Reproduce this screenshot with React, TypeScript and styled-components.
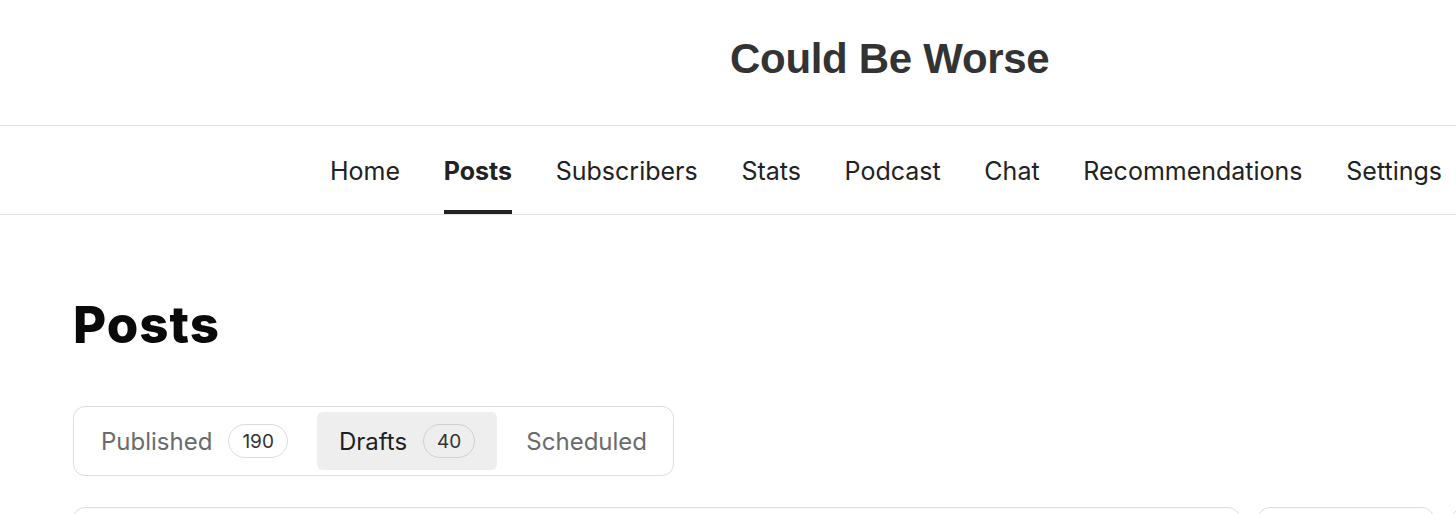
import React from "react";
import styled, { createGlobalStyle } from "styled-components";

const GlobalStyle = createGlobalStyle`
  html, body { margin: 0; padding: 0; background: #ffffff; }
  body { font-family: Inter, "Noto Sans", sans-serif; color: #222; overflow: hidden; }
  * { box-sizing: border-box; }
`;

const Header = styled.header`
  height: 126px;
  border-bottom: 1px solid #e2e2e2;
  display: flex;
  align-items: center;
  padding: 0 0 8px 730px;
`;

const Title = styled.h1`
  margin: 0;
  font-family: "Liberation Sans", Arial, sans-serif;
  font-weight: 700;
  font-size: 42px;
  letter-spacing: -0.3px;
  color: #333;
`;

const Nav = styled.nav`
  height: 89px;
  border-bottom: 1px solid #e2e2e2;
  display: flex;
  gap: 43.7px;
  padding-left: 330px;
`;

const NavItem = styled.a<{ $active?: boolean }>`
  display: flex;
  align-items: center;
  height: 88px;
  font-size: 25px;
  font-weight: ${(p) => (p.$active ? 700 : 400)};
  color: #222;
  text-decoration: none;
  white-space: nowrap;
  border-bottom: 4px solid ${(p) => (p.$active ? "#222" : "transparent")};
  padding-top: 6px;
`;

const Main = styled.main`
  padding: 80px 0 0 73px;
`;

const Heading = styled.h2`
  margin: 0;
  font-weight: 800;
  font-size: 51px;
  line-height: 60px;
  color: #0a0a0a;
  letter-spacing: 1px;
`;

const TabBox = styled.div`
  margin-top: 51px;
  display: inline-flex;
  gap: 7px;
  padding: 5px 4px 5px 5px;
  border: 1px solid #dedede;
  border-radius: 12px;
`;

const Tab = styled.div<{ $active?: boolean }>`
  display: flex;
  align-items: center;
  gap: 16px;
  height: 58px;
  padding: 0 22px;
  border-radius: 6px;
  background: ${(p) => (p.$active ? "#eeeeee" : "transparent")};
  color: ${(p) => (p.$active ? "#1f1f1f" : "#6b6b6b")};
  font-size: 24px;
`;

const Badge = styled.span<{ $active?: boolean }>`
  display: inline-flex;
  align-items: center;
  justify-content: center;
  height: 34px;
  padding: 0 13px;
  border: 1px solid ${(p) => (p.$active ? "#d0d0d0" : "#dcdcdc")};
  border-radius: 17px;
  font-size: 19px;
  color: #333;
`;

const Toolbar = styled.div`
  margin-top: 31px;
  display: flex;
  gap: 18px;
`;

const Field = styled.div<{ $w: number }>`
  flex: 0 0 ${(p) => p.$w}px;
  height: 50px;
  border: 1px solid #dcdcdc;
  border-radius: 12px;
`;

const navItems = [
  "Home",
  "Posts",
  "Subscribers",
  "Stats",
  "Podcast",
  "Chat",
  "Recommendations",
  "Settings",
];

export default function App() {
  return (
    <>
      <GlobalStyle />
      <Header>
        <Title>Could Be Worse</Title>
      </Header>
      <Nav>
        {navItems.map((n) => (
          <NavItem key={n} $active={n === "Posts"}>
            {n}
          </NavItem>
        ))}
      </Nav>
      <Main>
        <Heading>Posts</Heading>
        <TabBox>
          <Tab>
            Published <Badge>190</Badge>
          </Tab>
          <Tab $active>
            Drafts <Badge $active>40</Badge>
          </Tab>
          <Tab>Scheduled</Tab>
        </TabBox>
        <Toolbar>
          <Field $w={1167} />
          <Field $w={176} />
          <Field $w={100} />
        </Toolbar>
      </Main>
    </>
  );
}
